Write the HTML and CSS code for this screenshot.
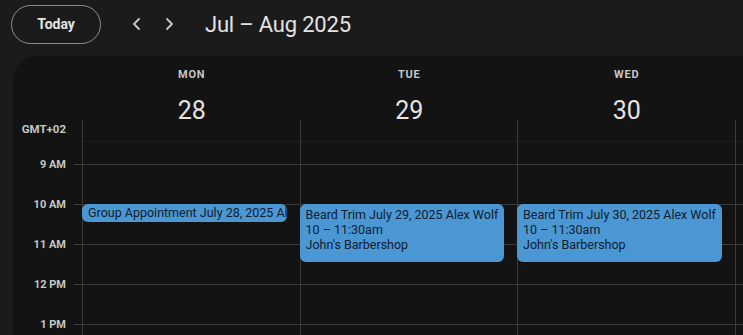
FILE: index.html
```html
<!DOCTYPE html>
<html>
<head>
<meta charset="utf-8">
<link rel="stylesheet" href="styles.css">
</head>
<body>
<header class="topbar">
  <button class="today">Today</button>
  <div class="navs">
    <span class="nav"><svg width="10" height="14" viewBox="0 0 10 14"><polyline points="7,2 2,7 7,12" fill="none" stroke="#c8c8c8" stroke-width="1.8" stroke-linecap="round" stroke-linejoin="round"/></svg></span>
    <span class="nav"><svg width="10" height="14" viewBox="0 0 10 14"><polyline points="3,2 8,7 3,12" fill="none" stroke="#c8c8c8" stroke-width="1.8" stroke-linecap="round" stroke-linejoin="round"/></svg></span>
  </div>
  <h1 class="title">Jul – Aug 2025</h1>
</header>
<main class="panel">
  <div class="dayheads">
    <div class="gutter-head"></div>
    <div class="dayhead"><div class="dow">MON</div><div class="dnum">28</div></div>
    <div class="dayhead"><div class="dow">TUE</div><div class="dnum">29</div></div>
    <div class="dayhead"><div class="dow">WED</div><div class="dnum">30</div></div>
  </div>
  <div class="timeline">
    <div class="gutter">
      <div class="gmt">GMT+02</div>
      <div class="hour"><span class="hl">9 AM</span><span class="tick"></span></div>
      <div class="hour"><span class="hl">10 AM</span><span class="tick"></span></div>
      <div class="hour"><span class="hl">11 AM</span><span class="tick"></span></div>
      <div class="hour"><span class="hl">12 PM</span><span class="tick"></span></div>
      <div class="hour"><span class="hl">1 PM</span><span class="tick"></span></div>
    </div>
    <div class="day">
      <div class="allday"></div>
      <div class="slot"></div><div class="slot"></div><div class="slot"></div><div class="slot"></div><div class="slot"></div>
      <div class="event short" style="top:84px;height:18px"><div class="ev-title">Group Appointment July 28, 2025 Alex Wolf</div></div>
    </div>
    <div class="day">
      <div class="allday"></div>
      <div class="slot"></div><div class="slot"></div><div class="slot"></div><div class="slot"></div><div class="slot"></div>
      <div class="event" style="top:84px;height:58px">
        <div class="ev-title">Beard Trim July 29, 2025 Alex Wolf</div>
        <div class="ev-line">10 – 11:30am</div>
        <div class="ev-line">John's Barbershop</div>
      </div>
    </div>
    <div class="day">
      <div class="allday"></div>
      <div class="slot"></div><div class="slot"></div><div class="slot"></div><div class="slot"></div><div class="slot"></div>
      <div class="event" style="top:84px;height:58px">
        <div class="ev-title">Beard Trim July 30, 2025 Alex Wolf</div>
        <div class="ev-line">10 – 11:30am</div>
        <div class="ev-line">John's Barbershop</div>
      </div>
    </div>
    <div class="day rest">
      <div class="allday"></div>
      <div class="slot"></div><div class="slot"></div><div class="slot"></div><div class="slot"></div><div class="slot"></div>
    </div>
  </div>
</main>
</body>
</html>
```
FILE: styles.css
```css
* { box-sizing: border-box; }
html, body { margin: 0; padding: 0; }
body {
  background: #1b1b1b;
  width: 743px;
  height: 335px;
  overflow: hidden;
  font-family: Roboto, "Liberation Sans", sans-serif;
  color: #e3e3e3;
}
.topbar {
  height: 56px;
  display: flex;
  align-items: center;
  padding: 0 0 8px 11px;
}
.today {
  width: 90px;
  height: 39px;
  border: 1px solid #8e8e8e;
  border-radius: 20px;
  background: transparent;
  color: #e3e3e3;
  font-family: Roboto, "Liberation Sans", sans-serif;
  font-weight: 700;
  font-size: 14px;
  padding: 0;
}
.navs {
  display: flex;
  gap: 22px;
  margin-left: 31px;
}
.nav { display: flex; width: 10px; height: 14px; }
.title {
  margin: 0 0 0 31px;
  font-weight: 400;
  font-size: 22px;
  letter-spacing: -0.2px;
  color: #e3e3e3;
}
.panel {
  margin-left: 13px;
  background: #131313;
  border-top-left-radius: 24px;
  height: 279px;
  overflow: hidden;
}
.dayheads {
  display: flex;
  height: 64px;
}
.gutter-head { width: 69px; flex: none; }
.dayhead {
  width: 217.5px;
  flex: none;
  display: flex;
  flex-direction: column;
  align-items: center;
  padding-top: 12px;
  padding-left: 2px;
}
.dow {
  font-size: 11px;
  font-weight: 700;
  letter-spacing: 0.8px;
  color: #c4c7c5;
  line-height: 13px;
}
.dnum {
  font-size: 25px;
  line-height: 30px;
  margin-top: 15px;
  color: #e3e3e3;
}
.timeline {
  display: flex;
}
.gutter { width: 69px; flex: none; }
.gmt {
  height: 44px;
  padding: 2px 16px 0 0;
  text-align: right;
  font-size: 11.5px;
  font-weight: 700;
  color: #c4c7c5;
  line-height: 14px;
}
.hour {
  height: 40px;
  display: flex;
}
.hl {
  width: 61px;
  padding-right: 8px;
  text-align: right;
  font-size: 11px;
  font-weight: 700;
  color: #c4c7c5;
  line-height: 14px;
  margin-top: -6px;
  height: 14px;
}
.tick {
  width: 8px;
  border-top: 1px solid #3a3a3a;
}
.day {
  width: 217.5px;
  flex: none;
  border-left: 1px solid #3a3a3a;
  position: relative;
}
.day.rest { flex: 1; width: auto; }
.allday {
  height: 44px;
  position: relative;
}
.allday::after {
  content: "";
  position: absolute;
  left: 0; right: 0; top: 21px;
  border-top: 1px solid #1d1d1d;
}
.slot {
  height: 40px;
  border-top: 1px solid #3a3a3a;
}
.event {
  position: absolute;
  left: -1px;
  right: 13px;
  background: #4b97d3;
  border-radius: 6px;
  color: #102030;
  padding: 3px 0 2px 6px;
  font-size: 12.5px;
  line-height: 15px;
  overflow: hidden;
  white-space: nowrap;
}
.event.short { padding-top: 1px; line-height: 16px; }
.ev-title, .ev-line { overflow: hidden; }
```
